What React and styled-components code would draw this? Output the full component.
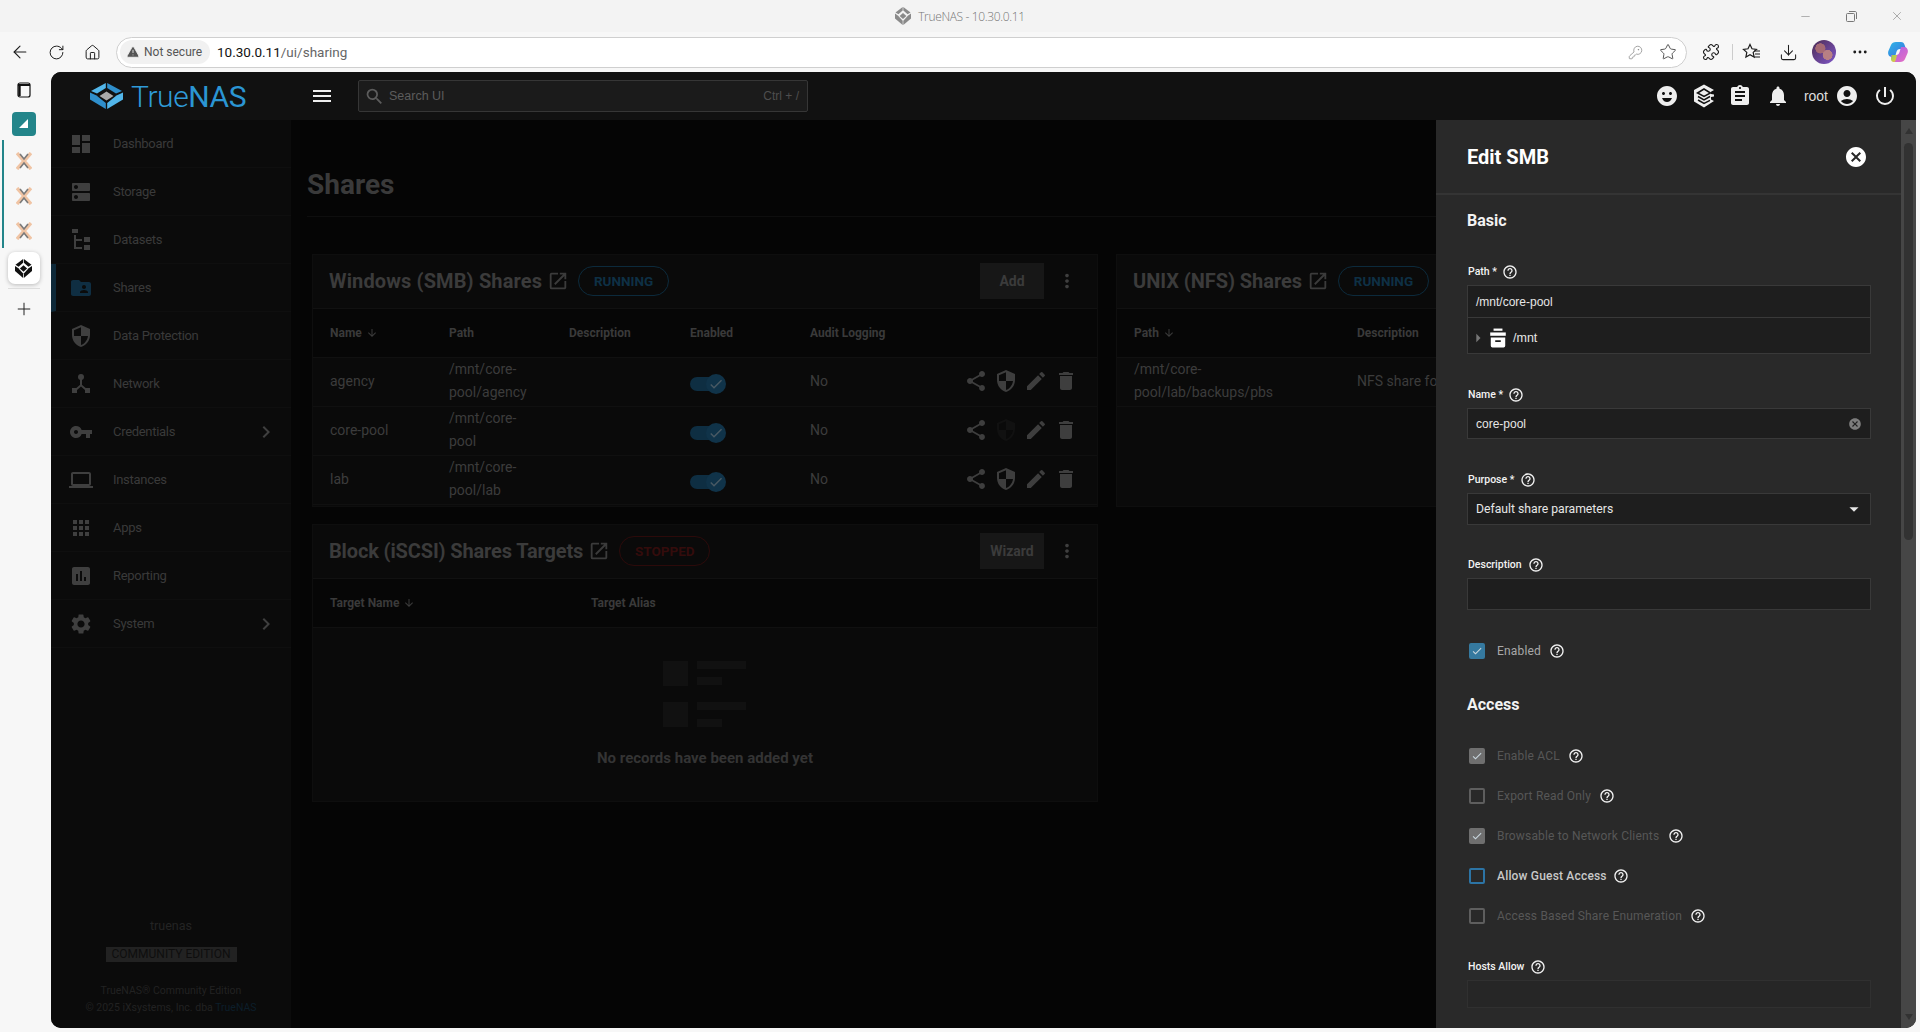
import React from 'react'
import styled, { createGlobalStyle } from 'styled-components'
import {
  MdDashboard, MdDns, MdFolderShared, MdSecurity, MdVpnKey, MdLaptop, MdApps, MdAssessment,
  MdSettings, MdChevronRight, MdEmojiEmotions, MdAssignment, MdNotifications, MdAccountCircle,
  MdPowerSettingsNew, MdCancel, MdHelpOutline, MdShare, MdEdit, MdDelete, MdOpenInNew,
  MdArrowDownward, MdMoreVert, MdMenu, MdSearch, MdArrowDropDown, MdArrowRight, MdCheck,
} from 'react-icons/md'
import { ArrowLeft, RotateCw, Home, Star, Puzzle, Download, MoreHorizontal, KeyRound, Plus, X, Minus, TriangleAlert } from 'lucide-react'

const GlobalStyle = createGlobalStyle`
  html, body { margin: 0; padding: 0; height: 100%; overflow: hidden; background: #f7f7f7; }
  * { box-sizing: border-box; }
  body { font-family: Roboto, "Liberation Sans", sans-serif; }
`

const Page = styled.div`
  width: 1920px;
  height: 1032px;
  display: flex;
  flex-direction: column;
  background: #f7f7f7;
`

/* browser chrome */
const TitleBar = styled.div`
  height: 32px;
  background: #f3f3f3;
  display: flex;
  align-items: center;
  justify-content: center;
  gap: 7px;
  position: relative;
  color: #767676;
  font: 300 12px "Open Sans", sans-serif;
`
const TitleText = styled.span`
  letter-spacing: -0.35px;
`
const WindowButtons = styled.div`
  position: absolute;
  right: 0;
  top: 0;
  display: flex;
  color: #777;
`
const WindowButton = styled.div`
  width: 46px;
  height: 32px;
  display: flex;
  align-items: center;
  justify-content: center;
`
const Toolbar = styled.div`
  height: 40px;
  display: flex;
  align-items: center;
  padding: 0 4px 0 2px;
  background: #f7f7f7;
`
const NavButton = styled.div`
  width: 36px;
  height: 36px;
  flex: none;
  display: flex;
  align-items: center;
  justify-content: center;
  margin-left: ${(p) => p.$gap || 0}px;
  color: #1c1c1c;
`
const AddressBar = styled.div`
  width: 1571px;
  height: 31px;
  margin: 0 6px;
  flex: none;
  border: 1px solid #cfcfcf;
  border-radius: 16px;
  background: #fff;
  display: flex;
  align-items: center;
  padding: 0 2px 0 3px;
  font-size: 13px;
`
const SecurityChip = styled.div`
  width: 90px;
  height: 24px;
  border-radius: 12px;
  background: #f1f1f1;
  display: flex;
  align-items: center;
  gap: 4px;
  padding-left: 6px;
  color: #555;
  font-size: 12px;
`
const Url = styled.span`
  margin-left: 7px;
  color: #666;
  font-size: 13.5px;
  b { font-weight: 400; color: #111; }
`
const AddressIcons = styled.div`
  margin-left: auto;
  display: flex;
  align-items: center;
  gap: 16px;
  padding-right: 7px;
  color: #666;
`
const ToolbarDivider = styled.div`
  width: 1px;
  height: 16px;
  background: #ccc;
  margin: 0 1px 0 3px;
`
const Avatar = styled.div`
  width: 24px;
  height: 24px;
  border-radius: 50%;
  background: radial-gradient(circle at 35% 35%, #a56a74 0 22%, transparent 24%),
    radial-gradient(circle at 65% 62%, #b88084 0 22%, transparent 24%),
    linear-gradient(135deg, #4d2c52, #7f57c9);
`

const Workspace = styled.div`
  flex: 1;
  min-height: 0;
  display: flex;
  padding: 0 4px 4px 0;
`

/* edge vertical tabs */
const Rail = styled.div`
  width: 51px;
  flex: none;
  display: flex;
  flex-direction: column;
  align-items: center;
  padding: 4px 4px 0 0;
`
const RailIcon = styled.div`
  height: 28px;
  width: 28px;
  display: flex;
  align-items: center;
  justify-content: center;
  margin-bottom: 8px;
`
const TealTile = styled.div`
  width: 24px;
  height: 24px;
  border-radius: 4px;
  background: #23858a;
  display: flex;
  align-items: center;
  justify-content: center;
`
const TabGroup = styled.div`
  align-self: stretch;
  margin-top: 4px;
  margin-left: 2px;
  height: 108px;
  padding: 4px 3px 0 0;
  border-left: 2px solid #23858a;
  display: flex;
  flex-direction: column;
  align-items: center;
  justify-content: space-around;
`
const ActiveTab = styled.div`
  width: 32px;
  height: 32px;
  margin-top: 4px;
  border-radius: 7px;
  background: #fff;
  box-shadow: 0 1px 4px rgba(0, 0, 0, 0.25);
  display: flex;
  align-items: center;
  justify-content: center;
`
const RailRule = styled.div`
  width: 32px;
  height: 1px;
  margin: 4px 0 10px;
  background: #ddd;
`

/* TrueNAS window */
const AppWindow = styled.div`
  flex: 1;
  min-width: 0;
  display: flex;
  flex-direction: column;
  border-radius: 10px;
  overflow: hidden;
  background: #050505;
`
const Header = styled.header`
  height: 48px;
  flex: none;
  background: #111;
  display: flex;
  align-items: center;
  color: #eee;
`
const Brand = styled.div`
  width: 240px;
  padding-left: 39px;
  display: flex;
  align-items: center;
  gap: 8px;
  flex: none;
`
const BrandName = styled.span`
  font: 300 30px Roboto, sans-serif;
  letter-spacing: -0.4px;
  color: #2f9bd8;
  b { font-weight: 400; color: #2b95d3; }
`
const MenuButton = styled.div`
  margin-left: 19px;
  width: 24px;
  display: flex;
  color: #eee;
`
const SearchBox = styled.div`
  margin-left: 24px;
  width: 450px;
  height: 32px;
  background: #1b1b1b;
  border: 1px solid #363636;
  border-radius: 2px;
  display: flex;
  align-items: center;
  padding: 0 8px 0 5px;
  gap: 4px;
  color: #5c5c5c;
  font: 12.5px "Liberation Sans", sans-serif;
`
const SearchHint = styled.span`
  margin-left: auto;
  font-size: 12px;
  color: #4e4e4e;
`
const HeaderIcons = styled.div`
  margin-left: auto;
  display: flex;
  align-items: center;
  padding-right: 19px;
`
const HeaderIcon = styled.div`
  display: flex;
  align-items: center;
  justify-content: center;
  margin-left: ${(p) => p.$gap || 0}px;
  color: #eee;
`
const UserName = styled.span`
  margin-left: 14px;
  font: 14px "Liberation Sans", sans-serif;
  color: #ddd;
`
const Body = styled.div`
  flex: 1;
  min-height: 0;
  display: flex;
`
const Sidebar = styled.nav`
  width: 240px;
  flex: none;
  display: flex;
  flex-direction: column;
  background: #0b0b0b;
`
const NavItem = styled.div`
  height: 48px;
  flex: none;
  display: flex;
  align-items: center;
  padding-left: ${(p) => (p.$active ? 13 : 18)}px;
  padding-right: 13px;
  border-bottom: 1px solid #0f0f0f;
  border-left: ${(p) => (p.$active ? '5px solid #0d2838' : 'none')};
  color: ${(p) => (p.$active ? '#0f2e42' : '#3f3f3f')};
`
const NavIconSlot = styled.span`
  width: 24px;
  flex: none;
  display: flex;
  justify-content: center;
`
const NavLabel = styled.span`
  margin-left: 20px;
  font-size: 13px;
  letter-spacing: -0.3px;
  color: #3a3a3a;
`
const NavChevron = styled.span`
  margin-left: auto;
  display: flex;
  color: #3f3f3f;
`
const SideFooter = styled.div`
  margin-top: auto;
  padding-bottom: 12px;
  display: flex;
  flex-direction: column;
  align-items: center;
  color: #222;
  font-size: 10.5px;
`
const HostName = styled.div`
  font-size: 12.5px;
  color: #242424;
  margin-bottom: 14px;
`
const Edition = styled.div`
  height: 15px;
  width: 131px;
  background: #222;
  color: #0e0e0e;
  font-size: 12px;
  line-height: 15px;
  text-align: center;
  margin-bottom: 20px;
`
const FooterLine = styled.div`
  line-height: 17px;
  a { color: #0c1e2a; }
`

const Content = styled.main`
  flex: 1;
  min-width: 0;
  overflow: hidden;
  padding: 0 0 0 16px;
`
const PageTitleRow = styled.div`
  height: 97px;
  display: flex;
  align-items: center;
  border-bottom: 1px solid #0e0e0e;
`
const PageTitle = styled.h1`
  margin: 32px 0 0;
  font: 700 28px Roboto, sans-serif;
  letter-spacing: 0;
  color: #3a3a3a;
`
const CardGrid = styled.div`
  margin: 37px 0 0 5px;
  display: grid;
  grid-template-columns: 786px 786px;
  gap: 17px 18px;
  width: 1590px;
`
const CardColumn = styled.div`
  display: flex;
  flex-direction: column;
  gap: 17px;
`
const Card = styled.section`
  background: #0a0a0a;
  border: 1px solid #0e0e0e;
  height: ${(p) => p.$h}px;
`
const CardHead = styled.div`
  height: 54px;
  display: flex;
  align-items: center;
  padding: 0 19px 2px 16px;
  border-bottom: 1px solid #111;
`
const CardTitle = styled.h2`
  margin: 0;
  font: 700 20px Roboto, sans-serif;
  letter-spacing: ${(p) => p.$track}px;
  color: #3b3b3b;
`
const OpenLink = styled.span`
  margin-left: 5px;
  display: flex;
  color: #3b3b3b;
`
const StatusPill = styled.span`
  margin-left: 9px;
  height: 30px;
  width: 91px;
  flex: none;
  border-radius: 15px;
  border: 1px solid ${(p) => (p.$stopped ? '#2c0a0a' : '#0c2a3c')};
  color: ${(p) => (p.$stopped ? '#340c0c' : '#0e3045')};
  font-size: 13.5px;
  font-weight: 700;
  display: flex;
  align-items: center;
  justify-content: center;
`
const CardAction = styled.div`
  margin-left: auto;
  height: 36px;
  width: 64px;
  background: #171717;
  color: #3b3b3b;
  font-size: 14px;
  font-weight: 700;
  display: flex;
  align-items: center;
  justify-content: center;
`
const Kebab = styled.span`
  margin-left: 12px;
  display: flex;
  color: #3f3f3f;
`
const TableHeadRow = styled.div`
  height: 49px;
  display: flex;
  align-items: center;
  padding-left: 17px;
  background: #060606;
  border-bottom: 1px solid #101010;
  color: #3a3a3a;
  font-size: 12px;
  font-weight: 700;
`
const TableRow = styled.div`
  height: 49px;
  display: flex;
  align-items: center;
  padding: 0 0 2px 17px;
  border-bottom: 1px solid #101010;
  color: #3c3c3c;
  font-size: 14px;
  line-height: 23px;
`
const Cell = styled.div`
  width: ${(p) => p.$w}px;
  flex: none;
  display: flex;
  align-items: center;
  gap: 4px;
`
const Toggle = styled.div`
  position: relative;
  width: 32px;
  height: 14px;
  border-radius: 7px;
  margin-top: 6px;
  background: #0e2e42;
`
const ToggleKnob = styled.div`
  position: absolute;
  right: -4px;
  top: -3px;
  width: 20px;
  height: 20px;
  border-radius: 50%;
  background: #103349;
  color: #4a5a64;
  display: flex;
  align-items: center;
  justify-content: center;
`
const RowActions = styled.div`
  margin-left: auto;
  margin-right: 19px;
  display: flex;
  gap: 6px;
  color: #3e3e3e;
`
const EmptyState = styled.div`
  display: flex;
  flex-direction: column;
  align-items: center;
  padding-top: 33px;
  color: #343434;
  font-size: 15px;
  font-weight: 700;
  gap: 22px;
`

/* slide-in form */
const Panel = styled.aside`
  width: 465px;
  flex: none;
  background: #292929;
  display: flex;
  flex-direction: column;
  overflow: hidden;
`
const PanelHead = styled.div`
  height: 75px;
  flex: none;
  display: flex;
  align-items: center;
  justify-content: space-between;
  padding: 0 33px 0 31px;
  border-bottom: 2px solid #343434;
  color: #fff;
`
const PanelTitle = styled.h2`
  margin: 0;
  font: 700 20px Roboto, sans-serif;
  color: #fff;
`
const PanelBody = styled.div`
  flex: 1;
  min-height: 0;
  padding: 16px 30px 0 31px;
  overflow: hidden;
`
const SectionTitle = styled.h3`
  margin: 0 0 ${(p) => p.$after}px;
  height: 20px;
  line-height: 20px;
  font-size: 16px;
  font-weight: 700;
  color: #f2f2f2;
`
const Field = styled.div`
  margin-bottom: ${(p) => p.$after}px;
`
const LabelRow = styled.div`
  height: 15px;
  margin-bottom: 6px;
  display: flex;
  align-items: center;
  gap: ${(p) => p.$gap}px;
  padding-left: 1px;
  color: #f3f3f3;
  font-size: 10.5px;
  font-weight: 500;
`
const HelpIcon = styled(MdHelpOutline)`
  color: #f2f2f2;
  flex: none;
`
const Control = styled.div`
  height: ${(p) => p.$h || 32}px;
  display: flex;
  align-items: center;
  justify-content: space-between;
  padding: 0 9px 0 8px;
  background: #1e1e1e;
  border: 1px solid #393939;
  color: #e6e6e6;
  font: ${(p) => (p.$plain ? '12.2px Roboto, sans-serif' : '12px "Liberation Sans", sans-serif')};
`
const FaintControl = styled(Control)`
  background: #262626;
  border-color: #303030;
`
const TreeRow = styled.div`
  height: 36px;
  display: flex;
  align-items: center;
  background: #1e1e1e;
  border: 1px solid #393939;
  border-top: none;
  color: #e6e6e6;
  font: 12.5px "Liberation Sans", sans-serif;
  padding: 4px 0 0 0;
`
const TreeArrow = styled(MdArrowRight)`
  color: #777;
  flex: none;
`
const TreeName = styled.span`
  margin-left: 5px;
`
const ClearButton = styled(MdCancel)`
  color: #7c7c7c;
  margin-right: -1px;
`
const CheckRow = styled.div`
  height: 16px;
  display: flex;
  align-items: center;
  margin-left: 2px;
  margin-bottom: ${(p) => p.$after}px;
  color: ${(p) => (p.$tone === 'off' ? '#575757' : p.$tone === 'strong' ? '#c8c8c8' : '#a8a8a8')};
  font-size: 12px;
  font-weight: ${(p) => (p.$tone === 'strong' ? 500 : 400)};
  letter-spacing: 0.18px;
`
const Box = styled.span`
  width: 16px;
  height: 16px;
  flex: none;
  border-radius: 2px;
  margin-right: 12px;
  display: flex;
  align-items: center;
  justify-content: center;
  color: #c9d6de;
  background: ${(p) => (p.$state === 'on' ? '#35799f' : p.$state === 'off-on' ? '#6f6f6f' : 'transparent')};
  border: 2px solid ${(p) =>
    p.$state === 'on' ? '#35799f' : p.$state === 'off-on' ? '#6f6f6f' : p.$state === 'focus' ? '#2c74a5' : '#5e5e5e'};
`
const CheckHelp = styled(HelpIcon)`
  margin-left: ${(p) => p.$gap}px;
`
const ScrollBar = styled.div`
  width: 15px;
  flex: none;
  background: #464646;
  display: flex;
  flex-direction: column;
  align-items: center;
  padding: 8px 0 8px;
`
const ScrollArrow = styled.div`
  width: 0;
  height: 0;
  border-left: 4.5px solid transparent;
  border-right: 4.5px solid transparent;
  ${(p) => (p.$down ? 'border-top: 6px solid #323232; margin-top: auto;' : 'border-bottom: 6px solid #323232;')}
`
const ScrollThumb = styled.div`
  width: 9px;
  height: 397px;
  margin-top: 9px;
  border-radius: 5px;
  background: #323232;
`

/* drawings */
const Logo = ({ w = 33, h = 26, light = '#52b6ea', dark = '#2f8fcc', mid = '#aaaaaa' }) => (
  <svg width={w} height={h} viewBox="0 0 33 26" preserveAspectRatio="none">
    <polygon points="15.800,0 15.800,5 7,10.500 1,8" fill={light} />
    <polygon points="17.200,0 17.200,5 26,10.500 32,8" fill={dark} />
    <polygon points="16.500,8.500 23.500,13 16.500,17.500 9.500,13" fill={mid} />
    <polygon points="0,9.500 6.500,12.500 15.800,20 15.800,26 0,16.500" fill={dark} />
    <polygon points="33,9.500 26.500,12.500 17.200,20 17.200,26 33,16.500" fill={light} />
  </svg>
)
const monoLogo = (c) => ({ light: c, dark: c, mid: c })

const CrossTab = () => (
  <svg width="16" height="18" viewBox="0 0 16 18" fill="none">
    <path d="M1 1l14 16M15 1L1 17" stroke="#f0c4a4" strokeWidth="3.4" />
    <path d="M4 2l4 5 4-5M4 16l4-5 4 5" stroke="#7b7b7b" strokeWidth="1.6" />
  </svg>
)
const TabsIcon = () => (
  <svg width="14" height="16" viewBox="0 0 14 16" fill="none" stroke="#111">
    <rect x="1" y="1" width="12" height="14" rx="2" strokeWidth="1.200" />
    <path d="M1 3h12" strokeWidth="2" />
    <path d="M2.500 3v11" strokeWidth="2.400" />
  </svg>
)
const Copilot = () => (
  <svg width="24" height="24" viewBox="0 0 24 24">
    <defs>
      <linearGradient id="cpa" x1="0" y1="0" x2="1" y2="1">
        <stop offset="0" stopColor="#2fb6e6" />
        <stop offset="1" stopColor="#3a6fe0" />
      </linearGradient>
      <linearGradient id="cpb" x1="0" y1="0" x2="1" y2="1">
        <stop offset="0" stopColor="#a85fe8" />
        <stop offset="1" stopColor="#e86fc0" />
      </linearGradient>
      <linearGradient id="cpc" x1="0" y1="0" x2="1" y2="1">
        <stop offset="0" stopColor="#8ed35a" />
        <stop offset="1" stopColor="#f5c542" />
      </linearGradient>
    </defs>
    <path d="M10 2h5c2 0 3 1 3.600 3L20 9h-6c-2 0-3 1-3.600 3L9 17H6c-3 0-4.600-3-3.600-6L5 5c.8-2 2.500-3 5-3z" fill="url(#cpa)" />
    <path d="M14 22H9c-2 0-3-1-3.600-3L5 15h5c2 0 3-1 3.600-3L15 7h3c3 0 4.600 3 3.600 6l-2.600 6c-.8 2-2.500 3-5 3z" fill="url(#cpb)" />
    <path d="M8 22c-2 0-3-1-3-3l1-4h5l-1 4c-.5 2-1 3-2 3z" fill="url(#cpc)" />
  </svg>
)
const RestoreIcon = () => (
  <svg width="11" height="11" viewBox="0 0 11 11" fill="none" stroke="currentColor">
    <rect x="0.500" y="2.500" width="8" height="8" rx="1" />
    <path d="M3 .5h6c1 0 1.500.5 1.500 1.500v6" />
  </svg>
)
const FavoritesIcon = () => (
  <svg width="20" height="20" viewBox="0 0 20 20" fill="none" stroke="#1c1c1c" strokeWidth="1.200">
    <path d="M8 2.500l2 4.300 4.500.6-3.300 3 .9 4.600L8 12.700 3.900 15l.9-4.600-3.300-3L6 6.800z" />
    <path d="M12 9h6M13 12h5M12 15h6" />
  </svg>
)
const CubeIcon = () => (
  <svg width="22" height="24" viewBox="0 0 22 24">
    <path d="M11 .5l10 5.500-3 1.700v2.300l3 .5v2l-3 .5v2.500l3 1.500L11 23.500 1 17.500V6z" fill="#eee" />
    <path d="M11 5l6.500 4L11 12.500 4.500 9zM5 12.500l6 3.300 6-3.300M5 16l6 3.300 6-3" fill="none" stroke="#111" strokeWidth="1.500" />
  </svg>
)
const PoolIcon = () => (
  <svg width="20" height="20" viewBox="0 0 18 18" fill="#fff">
    <rect x="5" y="0.500" width="8" height="2" />
    <rect x="2" y="4" width="14" height="3" />
    <path d="M2.500 8.500h13V16a1.500 1.500 0 0 1-1.500 1.500H4A1.500 1.500 0 0 1 2.500 16zM6.500 11v1.500h5V11z" fillRule="evenodd" />
  </svg>
)
const NetworkIcon = () => (
  <svg width="18" height="20" viewBox="0 0 18 20" fill="currentColor">
    <circle cx="9" cy="3" r="3" />
    <rect x="8" y="4" width="2" height="7" />
    <path d="M9 10l7 6-1.300 1.500L9 12.500l-5.700 5L2 16z" />
    <rect x="0" y="14" width="5" height="5" />
    <rect x="13" y="14" width="5" height="5" />
  </svg>
)
const DatasetIcon = () => (
  <svg width="18" height="22" viewBox="0 0 18 22" fill="currentColor">
    <rect x="0" y="0" width="6" height="4" />
    <rect x="2" y="6" width="2" height="13" />
    <rect x="2" y="10" width="8" height="2" />
    <rect x="2" y="18" width="8" height="2" />
    <rect x="12" y="8" width="6" height="5" />
    <rect x="12" y="16" width="6" height="5" />
  </svg>
)
const EmptyGraphic = () => (
  <svg width="84" height="66" viewBox="0 0 84 66" fill="#111">
    <rect x="0" y="0" width="25" height="25" />
    <rect x="34" y="0" width="49" height="8" />
    <rect x="34" y="16" width="25" height="8" />
    <rect x="0" y="41" width="25" height="25" />
    <rect x="34" y="41" width="49" height="8" />
    <rect x="34" y="58" width="25" height="8" />
  </svg>
)

const navItems = [
  { label: 'Dashboard', icon: <MdDashboard size={24} /> },
  { label: 'Storage', icon: <MdDns size={24} /> },
  { label: 'Datasets', icon: <DatasetIcon /> },
  { label: 'Shares', icon: <MdFolderShared size={24} />, active: true },
  { label: 'Data Protection', icon: <MdSecurity size={24} /> },
  { label: 'Network', icon: <NetworkIcon /> },
  { label: 'Credentials', icon: <MdVpnKey size={24} />, more: true },
  { label: 'Instances', icon: <MdLaptop size={24} /> },
  { label: 'Apps', icon: <MdApps size={24} /> },
  { label: 'Reporting', icon: <MdAssessment size={24} /> },
  { label: 'System', icon: <MdSettings size={24} />, more: true },
]

const smbRows = [
  { name: 'agency', path: ['/mnt/core-', 'pool/agency'] },
  { name: 'core-pool', path: ['/mnt/core-', 'pool'], noAcl: true },
  { name: 'lab', path: ['/mnt/core-', 'pool/lab'] },
]

const accessOptions = [
  { label: 'Enable ACL', state: 'off-on', tone: 'off', gap: 8 },
  { label: 'Export Read Only', state: 'off', tone: 'off', gap: 8 },
  { label: 'Browsable to Network Clients', state: 'off-on', tone: 'off', gap: 9 },
  { label: 'Allow Guest Access', state: 'focus', tone: 'strong', gap: 6 },
  { label: 'Access Based Share Enumeration', state: 'off', tone: 'off', gap: 8 },
]

const colW = [119, 120, 121, 120]

export default function App() {
  return (
    <Page>
      <GlobalStyle />
      <TitleBar>
        <Logo w={16} h={18} {...monoLogo('#8a8a8a')} />
        <TitleText>TrueNAS - 10.30.0.11</TitleText>
        <WindowButtons>
          <WindowButton><Minus size={13} strokeWidth={1} /></WindowButton>
          <WindowButton><RestoreIcon /></WindowButton>
          <WindowButton><X size={14} strokeWidth={1} /></WindowButton>
        </WindowButtons>
      </TitleBar>
      <Toolbar>
        <NavButton><ArrowLeft size={20} strokeWidth={1.3} /></NavButton>
        <NavButton><RotateCw size={17} strokeWidth={1.4} /></NavButton>
        <NavButton><Home size={17} strokeWidth={1.4} /></NavButton>
        <AddressBar>
          <SecurityChip>
            <TriangleAlert size={14} fill="#555" color="#f1f1f1" strokeWidth={1.5} />
            Not secure
          </SecurityChip>
          <Url><b>10.30.0.11</b>/ui/sharing</Url>
          <AddressIcons>
            <KeyRound size={15} strokeWidth={1.2} color="#888" />
            <Star size={18} strokeWidth={1.2} color="#444" />
          </AddressIcons>
        </AddressBar>
        <NavButton><Puzzle size={18} strokeWidth={1.5} /></NavButton>
        <ToolbarDivider />
        <NavButton><FavoritesIcon /></NavButton>
        <NavButton><Download size={19} strokeWidth={1.3} /></NavButton>
        <NavButton><Avatar /></NavButton>
        <NavButton><MoreHorizontal size={18} strokeWidth={1.8} /></NavButton>
        <NavButton $gap={2}><Copilot /></NavButton>
      </Toolbar>
      <Workspace>
        <Rail>
          <RailIcon><TabsIcon /></RailIcon>
          <TealTile>
            <svg width="10" height="10" viewBox="0 0 10 10"><polygon points="9,0 9,9 0,9" fill="#fff" /></svg>
          </TealTile>
          <TabGroup>
            <CrossTab />
            <CrossTab />
            <CrossTab />
          </TabGroup>
          <ActiveTab><Logo w={17} h={19} {...monoLogo('#111')} /></ActiveTab>
          <RailRule />
          <Plus size={20} strokeWidth={1.2} color="#222" />
        </Rail>
        <AppWindow>
          <Header>
            <Brand>
              <Logo />
              <BrandName>True<b>NAS</b></BrandName>
            </Brand>
            <MenuButton><MdMenu size={24} /></MenuButton>
            <SearchBox>
              <MdSearch size={21} />
              Search UI
              <SearchHint>Ctrl + /</SearchHint>
            </SearchBox>
            <HeaderIcons>
              <HeaderIcon><MdEmojiEmotions size={24} /></HeaderIcon>
              <HeaderIcon $gap={14}><CubeIcon /></HeaderIcon>
              <HeaderIcon $gap={13}><MdAssignment size={24} /></HeaderIcon>
              <HeaderIcon $gap={14}><MdNotifications size={24} /></HeaderIcon>
              <UserName>root</UserName>
              <HeaderIcon $gap={7}><MdAccountCircle size={24} /></HeaderIcon>
              <HeaderIcon $gap={14}><MdPowerSettingsNew size={24} /></HeaderIcon>
            </HeaderIcons>
          </Header>
          <Body>
            <Sidebar>
              {navItems.map((item) => (
                <NavItem key={item.label} $active={item.active}>
                  <NavIconSlot>{item.icon}</NavIconSlot>
                  <NavLabel>{item.label}</NavLabel>
                  {item.more && <NavChevron><MdChevronRight size={24} /></NavChevron>}
                </NavItem>
              ))}
              <SideFooter>
                <HostName>truenas</HostName>
                <Edition>COMMUNITY EDITION</Edition>
                <FooterLine>TrueNAS® Community Edition</FooterLine>
                <FooterLine>© 2025 iXsystems, Inc. dba <a>TrueNAS</a></FooterLine>
              </SideFooter>
            </Sidebar>
            <Content>
              <PageTitleRow>
                <PageTitle>Shares</PageTitle>
              </PageTitleRow>
              <CardGrid>
                <CardColumn>
                  <Card $h={253}>
                    <CardHead>
                      <CardTitle $track={0.13}>Windows (SMB) Shares</CardTitle>
                      <OpenLink><MdOpenInNew size={22} /></OpenLink>
                      <StatusPill>RUNNING</StatusPill>
                      <CardAction>Add</CardAction>
                      <Kebab><MdMoreVert size={22} /></Kebab>
                    </CardHead>
                    <TableHeadRow>
                      <Cell $w={colW[0]}>Name <MdArrowDownward size={12} /></Cell>
                      <Cell $w={colW[1]}>Path</Cell>
                      <Cell $w={colW[2]}>Description</Cell>
                      <Cell $w={colW[3]}>Enabled</Cell>
                      <Cell $w={120}>Audit Logging</Cell>
                    </TableHeadRow>
                    {smbRows.map((row) => (
                      <TableRow key={row.name}>
                        <Cell $w={colW[0]}>{row.name}</Cell>
                        <Cell $w={colW[1]}><div>{row.path[0]}<br />{row.path[1]}</div></Cell>
                        <Cell $w={colW[2]} />
                        <Cell $w={colW[3]}>
                          <Toggle><ToggleKnob><MdCheck size={16} /></ToggleKnob></Toggle>
                        </Cell>
                        <Cell $w={60}>No</Cell>
                        <RowActions>
                          <MdShare size={24} />
                          <MdSecurity size={24} color={row.noAcl ? '#111' : undefined} />
                          <MdEdit size={24} />
                          <MdDelete size={24} />
                        </RowActions>
                      </TableRow>
                    ))}
                  </Card>
                  <Card $h={278}>
                    <CardHead>
                      <CardTitle $track={-0.14}>Block (iSCSI) Shares Targets</CardTitle>
                      <OpenLink><MdOpenInNew size={22} /></OpenLink>
                      <StatusPill $stopped>STOPPED</StatusPill>
                      <CardAction>Wizard</CardAction>
                      <Kebab><MdMoreVert size={22} /></Kebab>
                    </CardHead>
                    <TableHeadRow>
                      <Cell $w={261}>Target Name <MdArrowDownward size={12} /></Cell>
                      <Cell $w={200}>Target Alias</Cell>
                    </TableHeadRow>
                    <EmptyState>
                      <EmptyGraphic />
                      No records have been added yet
                    </EmptyState>
                  </Card>
                </CardColumn>
                <CardColumn>
                  <Card $h={253}>
                    <CardHead>
                      <CardTitle $track={-0.05}>UNIX (NFS) Shares</CardTitle>
                      <OpenLink><MdOpenInNew size={22} /></OpenLink>
                      <StatusPill>RUNNING</StatusPill>
                    </CardHead>
                    <TableHeadRow>
                      <Cell $w={223}>Path <MdArrowDownward size={12} /></Cell>
                      <Cell $w={200}>Description</Cell>
                    </TableHeadRow>
                    <TableRow>
                      <Cell $w={223}><div>/mnt/core-<br />pool/lab/backups/pbs</div></Cell>
                      <Cell $w={200}>NFS share for backups</Cell>
                    </TableRow>
                  </Card>
                </CardColumn>
              </CardGrid>
            </Content>
            <Panel>
              <PanelHead>
                <PanelTitle>Edit SMB</PanelTitle>
                <MdCancel size={24} />
              </PanelHead>
              <PanelBody>
                <SectionTitle $after={33}>Basic</SectionTitle>
                <Field $after={33}>
                  <LabelRow $gap={5}>Path * <HelpIcon size={16} /></LabelRow>
                  <Control $h={33}>/mnt/core-pool</Control>
                  <TreeRow>
                    <TreeArrow size={20} />
                    <PoolIcon />
                    <TreeName>/mnt</TreeName>
                  </TreeRow>
                </Field>
                <Field $after={33}>
                  <LabelRow $gap={5}>Name * <HelpIcon size={16} /></LabelRow>
                  <Control $h={31}>core-pool <ClearButton size={14} /></Control>
                </Field>
                <Field $after={32}>
                  <LabelRow $gap={6}>Purpose * <HelpIcon size={16} /></LabelRow>
                  <Control $plain>Default share parameters <MdArrowDropDown size={22} style={{ marginRight: -4 }} /></Control>
                </Field>
                <Field $after={33}>
                  <LabelRow $gap={6}>Description <HelpIcon size={16} /></LabelRow>
                  <Control />
                </Field>
                <CheckRow $after={36} $tone="on">
                  <Box $state="on"><MdCheck size={14} /></Box>
                  Enabled
                  <CheckHelp size={16} $gap={8} />
                </CheckRow>
                <SectionTitle $after={33}>Access</SectionTitle>
                {accessOptions.map((opt, i) => (
                  <CheckRow key={opt.label} $after={i === accessOptions.length - 1 ? 35 : 24} $tone={opt.tone}>
                    <Box $state={opt.state}>{opt.state === 'off-on' && <MdCheck size={14} />}</Box>
                    {opt.label}
                    <CheckHelp size={16} $gap={opt.gap} />
                  </CheckRow>
                ))}
                <LabelRow $gap={6}>Hosts Allow <HelpIcon size={16} /></LabelRow>
                <FaintControl $h={28} />
              </PanelBody>
            </Panel>
            <ScrollBar>
              <ScrollArrow />
              <ScrollThumb />
              <ScrollArrow $down />
            </ScrollBar>
          </Body>
        </AppWindow>
      </Workspace>
    </Page>
  )
}
